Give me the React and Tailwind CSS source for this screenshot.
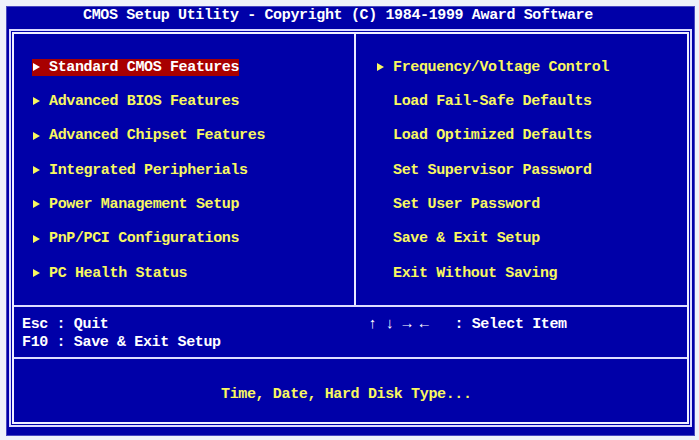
const LEFT_ITEMS = [
  { label: 'Standard CMOS Features', arrow: true, active: true },
  { label: 'Advanced BIOS Features', arrow: true },
  { label: 'Advanced Chipset Features', arrow: true },
  { label: 'Integrated Peripherials', arrow: true },
  { label: 'Power Management Setup', arrow: true },
  { label: 'PnP/PCI Configurations', arrow: true },
  { label: 'PC Health Status', arrow: true },
];

const RIGHT_ITEMS = [
  { label: 'Frequency/Voltage Control', arrow: true },
  { label: 'Load Fail-Safe Defaults' },
  { label: 'Load Optimized Defaults' },
  { label: 'Set Supervisor Password' },
  { label: 'Set User Password' },
  { label: 'Save & Exit Setup' },
  { label: 'Exit Without Saving' },
];

function Pointer({ color }) {
  return (
    <svg className="shrink-0" width="7" height="8" viewBox="0 0 7 8">
      <path d="M0 0 L7 4 L0 8 Z" fill={color} />
    </svg>
  );
}

function MenuItem({ item }) {
  const active = item.active;
  return (
    <div className="flex h-[34.33px] items-center">
      <div
        className={
          active
            ? 'flex h-[17px] items-center gap-[9px] bg-[#a80000] pl-[1px] text-white'
            : 'flex h-[17px] items-center gap-[9px] pl-[1px] text-[#f8f860]'
        }
      >
        {item.arrow ? <Pointer color={active ? '#ffffff' : '#f8f860'} /> : <span className="w-[7px]" />}
        <span className="whitespace-pre leading-[19px]">{item.label}</span>
      </div>
    </div>
  );
}

export default function App() {
  return (
    <div className="h-[440px] w-[699px] bg-[#eef2fa] pl-[6px] pt-[6px] font-['Liberation_Mono','DejaVu_Sans_Mono',monospace] text-[15px] font-bold tracking-[-0.36px]">
      <div className="flex h-[430px] w-[689px] flex-col border border-[#4848c0] bg-[#0000a8]">
        <div className="h-[17px] whitespace-pre pl-[76px] pt-[1px] leading-[16px] text-white">
          CMOS Setup Utility - Copyright (C) 1984-1999 Award Software
        </div>

        <div className="mx-[2px] mt-[5px] h-[398px] border-2 border-[#dcdcff] p-[1px]">
          <div className="flex h-full flex-col border-2 border-[#f0f0ff]">
            <div className="flex h-[271px]">
              <div className="w-[340px] pl-[18px] pt-[16px]">
                {LEFT_ITEMS.map((item) => (
                  <MenuItem item={item} key={item.label} />
                ))}
              </div>
              <div className="w-[2px] bg-[#e8e8ff]" />
              <div className="flex-1 pl-[20px] pt-[16px]">
                {RIGHT_ITEMS.map((item) => (
                  <MenuItem item={item} key={item.label} />
                ))}
              </div>
            </div>

            <div className="h-[2px] bg-[#dcdcff]" />

            <div className="flex h-[50px] pt-[9px] leading-[18px] text-white">
              <div className="w-[354px] pl-[8px]">
                <p className="whitespace-pre">Esc : Quit</p>
                <p className="whitespace-pre">F10 : Save &amp; Exit Setup</p>
              </div>
              <p className="whitespace-pre">↑ ↓ → ←   : Select Item</p>
            </div>

            <div className="h-[2px] bg-[#dcdcff]" />

            <div className="flex-1 pl-[207px] pt-[27px] leading-[18px] text-[#f8f860]">
              <p className="whitespace-pre">Time, Date, Hard Disk Type...</p>
            </div>
          </div>
        </div>
      </div>
    </div>
  );
}
